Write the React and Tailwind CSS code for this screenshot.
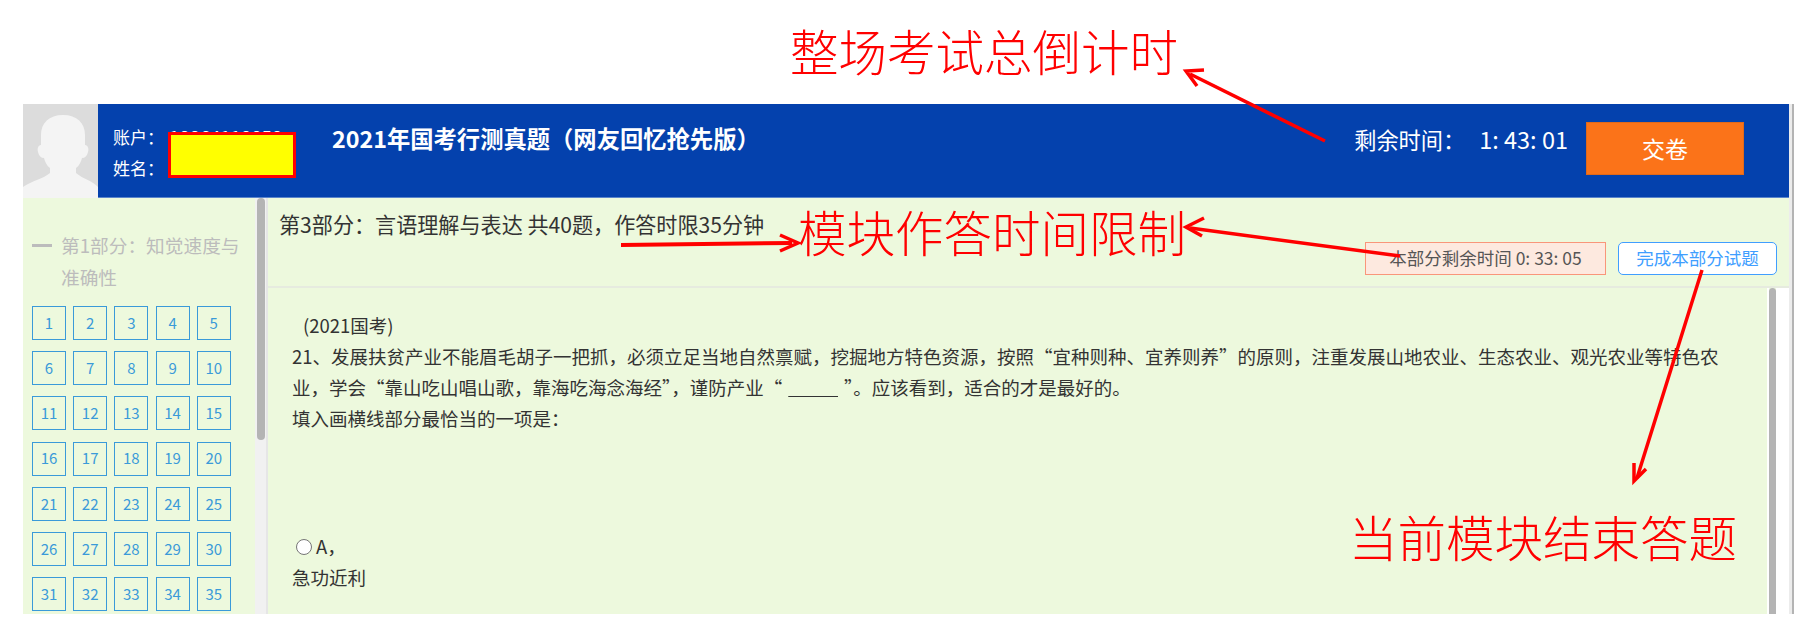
// App.jsx - exam page with red annotations
const NUMS = Array.from({ length: 35 }, (_, i) => i + 1);

const Avatar = () => (
  <svg className="w-[75px] h-[94px] shrink-0" viewBox="0 0 75 94">
    <rect width="75" height="94" fill="#dcdcdc" />
    <path
      d="M40 11C26 11 18 19 18 31L18 41C15 41 14 45 15 48C16 52 18 54 21 54C22 58 24 62 27 64L27 69C20 75 8 77 0 83L0 94L75 94L75 83C70 77 60 75 53 69L53 64C56 62 58 58 59 54C62 54 64 52 65 48C66 45 65 41 62 41L62 31C62 19 54 11 40 11Z"
      fill="#f4f4f4"
    />
  </svg>
);

// red arrows drawn on top of the screenshot
const Arrows = () => (
  <svg className="absolute left-0 top-0 pointer-events-none" width="1806" height="640" viewBox="0 0 1806 640">
    <g fill="none" stroke="#ff0000" strokeWidth="3.5">
      <path d="M1325 141L1190 74" />
      <path d="M1204 70L1186 71L1197 86" />
      <path d="M621 245L792 243" strokeWidth="4" />
      <path d="M780 235L798 243L780 251" />
      <path d="M1400 256L1190 228" />
      <path d="M1204 218L1186 227L1202 236" />
      <path d="M1702 270L1637 478" />
      <path d="M1634 463L1634 481L1646 469" />
    </g>
  </svg>
);

const Caption = ({ className, children }) => (
  <div className={`absolute text-[48.5px] leading-none font-light text-[#ff0000] whitespace-nowrap ${className}`}>
    {children}
  </div>
);

export default function App() {
  return (
    <div
      className="relative w-[1806px] h-[640px] overflow-hidden bg-white pt-[104px] pl-[23px]"
      style={{ fontFamily: '"Noto Sans CJK SC", sans-serif' }}
    >
      <div className="flex flex-col w-[1766px] h-[510px]">
        {/* Header */}
        <div className="flex h-[94px] bg-[#0441ad] shrink-0 border-b border-[#5b85cc]">
          <Avatar />
          <div className="w-[70px] pl-[15px] pt-[17px] text-[17px] leading-[31px] text-white shrink-0 whitespace-nowrap relative">
            <div>账户：<span className="absolute left-[71px] top-[18px] text-[18.5px]">18864118858</span></div>
            <div>姓名：</div>
            <div className="absolute left-[70px] top-[28px] w-[128px] h-[46px] bg-[#ffff00] border-[3px] border-[#ff0000]"></div>
          </div>
          <div className="ml-[164px] pt-[16px] text-[23.3px] leading-[36px] font-bold text-white whitespace-nowrap">
            2021年国考行测真题（网友回忆抢先版）
          </div>
          <div className="ml-auto flex items-start">
            <div className="pt-[18px] text-[22.2px] leading-[34px] text-white whitespace-nowrap">
              剩余时间：<span className="ml-[14px] text-[23.5px]">1: 43: 01</span>
            </div>
            <button className="ml-[18px] mt-[18px] w-[158px] h-[53px] bg-[#fb7319] text-white text-[23px] border border-[#e0691a]">交卷</button>
          </div>
          <div className="w-[45px] shrink-0"></div>
        </div>

        <div className="flex flex-1 min-h-0">
          {/* Sidebar */}
          <div className="w-[232px] bg-[#edf9dd] shrink-0 pl-[9px] overflow-hidden">
            <div className="flex pt-[31px] text-[18.7px] leading-[32px] text-[#bcbcbc]">
              <span className="w-[20px] h-[2.5px] bg-[#bcbcbc] mt-[15px] mr-[9px] shrink-0"></span>
              <span className="w-[190px]">第1部分：知觉速度与准确性</span>
            </div>
            <div className="grid grid-cols-[repeat(5,34px)] gap-x-[7.2px] gap-y-[11.2px] mt-[13px]">
              {NUMS.map((n) => (
                <div key={n} className="h-[34px] border border-[#3a9ad9] text-[#3a9ad9] text-[15px] flex items-center justify-center">
                  {n}
                </div>
              ))}
            </div>
          </div>
          {/* Sidebar scrollbar */}
          <div className="w-[11px] bg-[#f1f1f1] shrink-0 pl-[2px]">
            <div className="w-[8px] h-[242px] bg-[#b4b4b4] rounded-[4px]"></div>
          </div>
          <div className="w-[2px] bg-[#e6e6e6] shrink-0"></div>

          {/* Main */}
          <div className="flex-1 min-w-0 flex flex-col bg-[#edf9dd]">
            <div className="relative h-[90px] shrink-0 border-b-2 border-[#e6ebdf] pl-[11px] pt-[10px]">
              <div className="text-[21.1px] leading-[32px] text-[#333] whitespace-nowrap">第3部分：言语理解与表达 共40题，作答时限35分钟</div>
              <div className="absolute top-[44px] right-[12px] flex gap-[12px]">
                <div className="w-[241px] h-[33px] bg-[#fde9df] border border-[#f9967a] text-[#555] text-[17.5px] flex items-center justify-center whitespace-nowrap">
                  本部分剩余时间 0: 33: 05
                </div>
                <button className="w-[159px] h-[33px] bg-white border border-[#409eff] rounded-[5px] text-[#409eff] text-[17.5px] whitespace-nowrap">
                  完成本部分试题
                </button>
              </div>
            </div>
            <div className="flex-1 min-h-0 flex">
              <div className="flex-1 min-w-0 pl-[24px] pt-[22px] text-[18.5px] leading-[31px] text-[#333] whitespace-nowrap overflow-hidden">
                <div className="pl-[11px]">(2021国考)</div>
                <div>21、发展扶贫产业不能眉毛胡子一把抓，必须立足当地自然禀赋，挖掘地方特色资源，按照“宜种则种、宜养则养”的原则，注重发展山地农业、生态农业、观光农业等特色农</div>
                <div>业，学会“靠山吃山唱山歌，靠海吃海念海经”，谨防产业“<span className="underline ml-[6px] mr-[6px]">&nbsp;&nbsp;&nbsp;&nbsp;&nbsp;&nbsp;&nbsp;&nbsp;&nbsp;&nbsp;&nbsp;&nbsp;</span>”。应该看到，适合的才是最好的。</div>
                <div>填入画横线部分最恰当的一项是：</div>
                <div className="flex items-center mt-[97px] pl-[4px]">
                  <span className="w-[16px] h-[16px] rounded-full border border-[#767676] bg-white mr-[4px] shrink-0"></span>
                  <span>A，</span>
                </div>
                <div>急功近利</div>
              </div>
              <div className="w-[2px] bg-white shrink-0"></div>
              <div className="w-[7px] bg-[#b4b4b4] rounded-t-[4px] shrink-0"></div>
              <div className="w-[13px] bg-white shrink-0"></div>
            </div>
          </div>
        </div>
      </div>
      {/* Page scrollbar edge */}
      <div className="absolute left-[1789px] top-[104px] w-[3px] h-[510px] bg-[#ececec]"></div>
      <div className="absolute left-[1792px] top-[104px] w-[2px] h-[510px] bg-[#b4b4b4]"></div>

      <Caption className="left-[790px] top-[26px]">整场考试总倒计时</Caption>
      <Caption className="left-[798px] top-[207px]">模块作答时间限制</Caption>
      <Caption className="left-[1349px] top-[512px]">当前模块结束答题</Caption>
      <Arrows />
    </div>
  );
}
